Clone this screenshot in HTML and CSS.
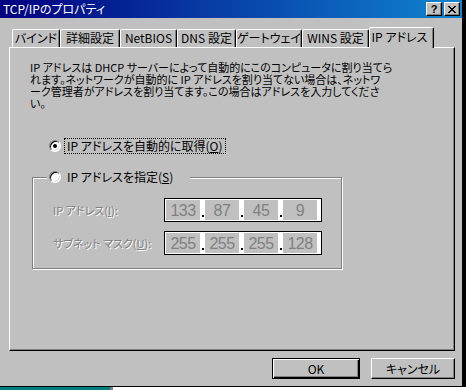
FILE: index.html
```html
<!DOCTYPE html>
<html lang="ja">
<head>
  <meta charset="UTF-8" />
  <title>TCP/IPのプロパティ</title>
  <link rel="stylesheet" href="styles.css">
</head>
<body>
  <div class="desktop">
    <div class="top-row">
      <div class="window">
        <div class="titlebar">
          <span class="title">TCP/IPのプロパティ</span>
          <div class="title-btns">
            <span class="tbtn help">?</span>
            <span class="tbtn">
              <svg width="8" height="7" viewBox="0 0 8 7">
                <path d="M0 0h2v1h1v1h2V1h1V0h2v1H7v1H6v1H5v1h1v1h1v1h1v1H6V6H5V5H3v1H2v1H0V6h1V5h1V4h1V3H2V2H1V1H0z" fill="#000"/>
              </svg>
            </span>
          </div>
        </div>

        <div class="body">
          <div class="tabs">
            <div class="tab w1">バインド</div>
            <div class="tab w2">詳細設定</div>
            <div class="tab w3">NetBIOS</div>
            <div class="tab w4">DNS 設定</div>
            <div class="tab w5">ゲートウェイ</div>
            <div class="tab w6">WINS 設定</div>
            <div class="tab active">IP アドレス</div>
          </div>

          <div class="panel">
            <p class="desc">
              IP アドレスは DHCP サーバーによって自動的にこのコンピュータに割り当てら<br>
              れます。ネットワークが自動的に IP アドレスを割り当てない場合は、ネットワ<br>
              ーク管理者がアドレスを割り当てます。この場合はアドレスを入力してくださ<br>
              い。
            </p>

            <div class="option first">
              <span class="radio checked"></span>
              <span class="label focus">IP アドレスを自動的に取得(<u>O</u>)</span>
            </div>

            <div class="group">
              <div class="option group-head">
                <span class="radio"></span>
                <span class="label">IP アドレスを指定(<u>S</u>)</span>
              </div>

              <div class="field-row">
                <span class="field-label">IP アドレス(<u>I</u>):</span>
                <div class="ipbox">
                  <span class="seg">133</span><span class="dot"></span>
                  <span class="seg">87</span><span class="dot"></span>
                  <span class="seg">45</span><span class="dot"></span>
                  <span class="seg">9</span>
                </div>
              </div>

              <div class="field-row">
                <span class="field-label">サブネット マスク(<u>U</u>):</span>
                <div class="ipbox">
                  <span class="seg">255</span><span class="dot"></span>
                  <span class="seg">255</span><span class="dot"></span>
                  <span class="seg">255</span><span class="dot"></span>
                  <span class="seg">128</span>
                </div>
              </div>
            </div>
          </div>

          <div class="buttons">
            <button class="btn default"><span>OK</span></button>
            <button class="btn">キャンセル</button>
          </div>
        </div>
      </div>
      <div class="edge"></div>
    </div>
    <div class="strip"><div class="teal"></div><div class="mark"></div></div>
  </div>
</body>
</html>
```

FILE: styles.css
```css
* {
  margin: 0;
  padding: 0;
  box-sizing: border-box;
}

body {
  background: #000;
  font-family: "Noto Sans CJK JP", "Noto Sans", sans-serif;
  font-size: 12px;
  font-feature-settings: "palt";
  color: #000;
  overflow: hidden;
}

.desktop {
  width: 466px;
  height: 390px;
  display: flex;
  flex-direction: column;
}

.top-row {
  display: flex;
  height: 387px;
}

.edge {
  flex: 1;
  background: #000;
}

.strip {
  flex: 1;
  display: flex;
  background: #fff;
}

.strip .teal {
  width: 110px;
  background: #008080;
}

.strip .mark {
  width: 3px;
  background: #808080;
}

/* window */
.window {
  width: 463px;
  height: 387px;
  background: #c0c0c0;
  border-right: 1px solid #000;
  border-bottom: 1px solid #000;
  display: flex;
  flex-direction: column;
}

.titlebar {
  height: 18px;
  background: linear-gradient(to right, #000080, #1084d0);
  display: flex;
  align-items: center;
  justify-content: space-between;
  padding: 0 2px 0 3px;
}

.title {
  color: #fff;
  font-size: 12px;
  line-height: 14px;
}

.title-btns {
  display: flex;
  gap: 2px;
}

.tbtn {
  width: 16px;
  height: 14px;
  background: #c0c0c0;
  border: 1px solid;
  border-color: #fff #000 #000 #fff;
  box-shadow: inset -1px -1px #808080;
  display: flex;
  align-items: center;
  justify-content: center;
}

.tbtn.help {
  font-family: "Liberation Sans", sans-serif;
  font-weight: bold;
  font-size: 11px;
  line-height: 11px;
}

.body {
  flex: 1;
  padding: 9px 7px 0 9px;
  display: flex;
  flex-direction: column;
}

/* tabs */
.tabs {
  display: flex;
  align-items: flex-end;
  height: 20px;
  padding-left: 3px;
  position: relative;
  z-index: 1;
}

.tab {
  height: 18px;
  border: 1px solid;
  border-bottom: none;
  border-color: #fff #000 transparent #fff;
  border-radius: 2px 2px 0 0;
  box-shadow: inset -1px 0 #808080;
  text-align: center;
  line-height: 16px;
  font-size: 12px;
  white-space: nowrap;
}

.w1 { width: 48px; }
.w2 { width: 60px; }
.w3 { width: 57px; }
.w4 { width: 59px; }
.w5 { width: 66px; }
.w6 { width: 67px; }

.tab.active {
  width: 65px;
  height: 21px;
  margin-bottom: -1px;
  background: #c0c0c0;
  line-height: 17px;
  padding-right: 4px;
}

.panel {
  height: 304px;
  border: 1px solid;
  border-color: #fff #000 #000 #fff;
  box-shadow: inset -1px -1px #808080;
  padding: 13px 0 0 0;
}

.desc {
  margin-left: 20px;
  font-size: 11px;
  line-height: 12px;
  white-space: nowrap;
}

/* radio options */
.option {
  display: flex;
  align-items: center;
  height: 16px;
}

.option.first {
  margin: 29px 0 0 39px;
}

.radio {
  width: 12px;
  height: 12px;
  border-radius: 50%;
  background: #fff;
  border: 1px solid;
  border-color: #808080 #fff #fff #808080;
  box-shadow: inset 1px 1px #000, inset -1px -1px #dfdfdf;
  display: flex;
  align-items: center;
  justify-content: center;
}

.radio.checked::after {
  content: "";
  width: 4px;
  height: 4px;
  border-radius: 50%;
  background: #000;
}

.label {
  margin-left: 3px;
  padding: 0 2px;
  border: 1px solid transparent;
  line-height: 14px;
}

.label.focus {
  border: 1px dotted #000;
}

/* group box */
.group {
  margin: 23px 0 0 22px;
  width: 310px;
  border: 1px solid #808080;
  box-shadow: inset 1px 1px #fff, 1px 1px #fff;
  padding-bottom: 13px;
}

.group-head {
  margin: -9px 0 0 14px;
  width: 143px;
  background: #c0c0c0;
  padding-left: 2px;
}

.field-row {
  display: flex;
  align-items: center;
  margin-top: 13px;
}

.field-row + .field-row {
  margin-top: 9px;
}

.field-label {
  width: 111px;
  margin-left: 20px;
  color: #808080;
  text-shadow: 1px 1px 0 #fff;
  font-size: 11px;
  white-space: nowrap;
}

.ipbox {
  width: 158px;
  height: 24px;
  border: 1px solid #000;
  background: #fff;
  display: flex;
  padding: 1px 0 1px 1px;
}

.seg {
  width: 34px;
  background: #c0c0c0;
  color: #808080;
  font-family: "Liberation Sans", sans-serif;
  font-size: 16px;
  letter-spacing: -0.5px;
  text-align: center;
  line-height: 22px;
}

.dot {
  width: 5px;
  display: flex;
  align-items: flex-end;
  justify-content: center;
  padding-bottom: 3px;
}

.dot::after {
  content: "";
  width: 2px;
  height: 2px;
  background: #000;
}

/* buttons */
.buttons {
  display: flex;
  justify-content: flex-end;
  gap: 11px;
  padding-top: 7px;
}

.btn {
  width: 84px;
  height: 21px;
  background: #c0c0c0;
  border: 1px solid;
  border-color: #fff #000 #000 #fff;
  box-shadow: inset -1px -1px #808080;
  font-family: inherit;
  font-size: 12px;
  font-feature-settings: "palt";
  color: #000;
}

.btn.default {
  width: 88px;
  border: 1px solid #000;
  box-shadow: inset 1px 1px #fff, inset -1px -1px #000, inset -2px -2px #808080;
}
```
